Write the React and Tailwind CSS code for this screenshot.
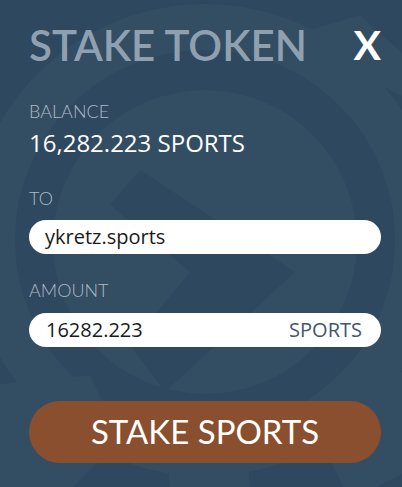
import React from 'react';

const heading = { fontFamily: 'Lato, "Noto Sans", sans-serif' };

// faint gear and arrow behind the form
function Watermark() {
  return (
    <svg className="absolute inset-0 w-full h-full" viewBox="0 0 402 487">
      <circle cx="205" cy="240" r="213" fill="none" stroke="#334d63" strokeWidth="46" />
      <path d="M-10 385 L90 375 L120 440 L60 500 L-10 500 Z" fill="#334d63" />
      <path d="M320 440 L345 385 L410 370 L410 470 L350 500 Z" fill="#334d63" />
      <path d="M165 430 L245 430 L250 490 L170 490 Z" fill="#334d63" />
      <path d="M310 30 L360 15 L410 60 L410 100 L370 80 Z" fill="#334d63" />
      <circle cx="205" cy="242" r="152" fill="#334d63" />
      <path d="M140 170 L295 272 L165 392 L130 345 L190 272 L110 205 Z" fill="#2e4860" />
    </svg>
  );
}

function Label({ children }) {
  return <div className="text-[18px] leading-[22px] font-light text-[#adbac6]" style={heading}>{children}</div>;
}

export default function App() {
  return (
    <div className="relative w-[402px] h-[487px] overflow-hidden bg-[#2e4860]" style={{ fontFamily: '"Open Sans", sans-serif' }}>
      <Watermark />
      <div className="relative flex flex-col pl-[29px] pr-[21px] pt-[19px]">
        {/* Header */}
        <div className="flex items-center justify-between">
          <h1 className="text-[42px] leading-[52px] font-semibold text-[#8fa1b0]" style={heading}>STAKE TOKEN</h1>
          <button className="text-[41px] leading-[52px] font-bold text-white" style={heading}>X</button>
        </div>

        <div className="mt-[29px]"><Label>BALANCE</Label></div>
        <div className="mt-[6px] text-[24px] leading-[30px] text-white">16,282.223 SPORTS</div>

        <div className="mt-[29px]"><Label>TO</Label></div>
        <div className="mt-[11px] h-[34px] rounded-full bg-white flex items-center px-[16px] text-[20px] text-[#1a1a1a]">ykretz.sports</div>

        <div className="mt-[25px]"><Label>AMOUNT</Label></div>
        <div className="mt-[12px] h-[34px] rounded-full bg-white flex items-center justify-between pl-[17px] pr-[19px] text-[#1a1a1a]">
          <span className="text-[20px]">16282.223</span>
          <span className="text-[20px] text-[#43566b]">SPORTS</span>
        </div>

        <button className="mt-[54px] h-[62px] rounded-full bg-[#8a4f2e] text-white text-[33px]" style={heading}>STAKE SPORTS</button>
      </div>
    </div>
  );
}
